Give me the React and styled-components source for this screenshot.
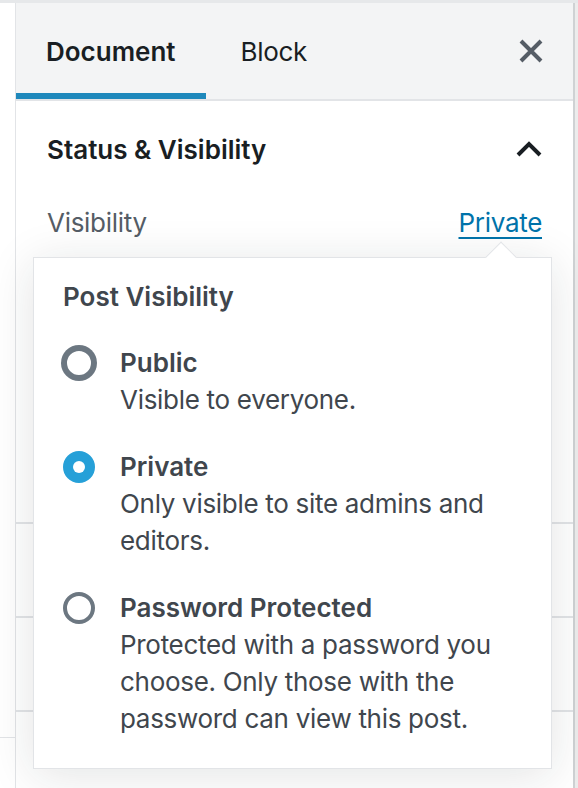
import styled, { createGlobalStyle } from 'styled-components';

const GlobalStyle = createGlobalStyle`
    html, body {
        margin: 0;
        padding: 0;
        background: #fff;
    }
    body {
        font-family: Inter, "Noto Sans", "Liberation Sans", sans-serif;
        -webkit-font-smoothing: antialiased;
    }
    * {
        box-sizing: border-box;
    }
`;

const Page = styled.div`
    width: 578px;
    height: 788px;
    overflow: hidden;
    display: flex;
    flex-direction: column;
`;

const TopBar = styled.div`
    height: 3px;
    flex: 0 0 auto;
    background: #e6e8ea;
`;

const Body = styled.div`
    flex: 1;
    display: flex;
    min-height: 0;
`;

const LeftGutter = styled.div`
    width: 15px;
    flex: 0 0 auto;
    display: flex;
    flex-direction: column;
`;

const GutterBlock = styled.div`
    height: 735px;
    border-bottom: 1px solid #e2e4e7;
`;

const RightGutter = styled.div`
    width: 3px;
    flex: 0 0 auto;
    background: #ececec;
`;

const Sidebar = styled.aside`
    position: relative;
    width: 560px;
    flex: 0 0 auto;
    border-left: 1px solid #e2e4e7;
    border-right: 2px solid #cfd2d4;
    display: flex;
    flex-direction: column;
`;

const Header = styled.header`
    height: 98px;
    flex: 0 0 auto;
    display: flex;
    align-items: stretch;
    background: #f3f4f5;
    border-bottom: 2px solid #e2e4e7;
    padding-right: 20px;
`;

const Tab = styled.button`
    border: none;
    margin: 0;
    background: transparent;
    font-family: inherit;
    font-size: 26px;
    letter-spacing: ${(p) => (p.$active ? '0' : '-0.3px')};
    color: #191e23;
    font-weight: ${(p) => (p.$active ? 600 : 400)};
    padding: 0 ${(p) => (p.$active ? '30px' : '35px')};
    box-shadow: ${(p) => (p.$active ? 'inset 0 -6px 0 #1e88bb' : 'none')};
    display: flex;
    align-items: center;
`;

const HeaderSpacer = styled.div`
    flex: 1;
`;

const IconButton = styled.button`
    border: none;
    background: transparent;
    padding: 0;
    width: ${(p) => p.$width || 44}px;
    display: flex;
    align-items: center;
    justify-content: center;
    color: ${(p) => p.$color || '#555d66'};
`;

const Panel = styled.section`
    flex: 0 0 auto;
    height: ${(p) => p.$height}px;
    border-bottom: 2px solid #e2e4e7;
    padding: 0 31px 0 31px;
    overflow: hidden;
`;

const PanelTitle = styled.div`
    height: ${(p) => p.$height || 96}px;
    display: flex;
    align-items: center;
    justify-content: space-between;
    font-size: 26px;
    font-weight: 600;
    color: #191e23;
`;

const Row = styled.div`
    height: ${(p) => p.$height || 50}px;
    display: flex;
    align-items: center;
    justify-content: space-between;
    font-size: 26px;
    letter-spacing: -0.3px;
    color: #555d66;
`;

const LinkButton = styled.a`
    color: #0073aa;
    text-decoration: underline;
    text-underline-offset: 5px;
    text-decoration-thickness: 2px;
`;

const Popover = styled.div`
    position: absolute;
    left: 17px;
    top: 254px;
    width: 519px;
    background: #fff;
    border: 1px solid #e2e4e7;
    box-shadow: 0 6px 44px rgba(25, 30, 35, 0.12);
    padding: 20px 30px 31px 29px;
    color: #40464d;

    &::before {
        content: '';
        position: absolute;
        left: 456px;
        top: -12px;
        width: 21px;
        height: 21px;
        background: #fff;
        border-top: 1px solid #e2e4e7;
        border-left: 1px solid #e2e4e7;
        transform: rotate(45deg);
    }
`;

const PopoverTitle = styled.div`
    font-size: 26px;
    line-height: 37px;
    font-weight: 600;
    color: #40464d;
    margin-bottom: 29px;
`;

const OptionList = styled.div`
    display: flex;
    flex-direction: column;
    gap: 30px;
`;

const Option = styled.label`
    display: flex;
    align-items: flex-start;
    gap: 25px;
`;

const Radio = styled.span`
    width: 32px;
    height: 32px;
    flex: 0 0 auto;
    margin-top: 3px;
    border-radius: 50%;
    border: 4px solid ${(p) => (p.$checked ? '#26a0d8' : '#6c7781')};
    background: ${(p) => (p.$checked ? '#26a0d8' : '#fff')};
    box-shadow: ${(p) => (p.$focused ? '0 0 0 2px #6c7781' : 'none')};
    display: flex;
    align-items: center;
    justify-content: center;

    &::after {
        content: '';
        display: ${(p) => (p.$checked ? 'block' : 'none')};
        width: 12px;
        height: 12px;
        border-radius: 50%;
        background: #fff;
    }
`;

const OptionText = styled.div`
    display: flex;
    flex-direction: column;
    font-size: 26px;
    line-height: 37px;
    max-width: 400px;
`;

const OptionLabel = styled.span`
    font-weight: 600;
    color: #40464d;
`;

const OptionHelp = styled.span`
    color: #40464d;
    letter-spacing: -0.3px;
`;

const CloseIcon = () => (
    <svg width="24" height="24" viewBox="0 0 24 24" fill="none" stroke="currentColor" strokeWidth="4" strokeLinecap="butt">
        <path d="M2 2 L22 22 M22 2 L2 22" />
    </svg>
);

const ChevronUp = () => (
    <svg width="26" height="16" viewBox="0 0 26 16" fill="none" stroke="currentColor" strokeWidth="4">
        <path d="M2 14 L13 3 L24 14" />
    </svg>
);

const options = [
    { id: 'public', label: 'Public', help: 'Visible to everyone.', focused: true },
    { id: 'private', label: 'Private', help: 'Only visible to site admins and editors.', checked: true },
    {
        id: 'password',
        label: 'Password Protected',
        help: 'Protected with a password you choose. Only those with the password can view this post.',
    },
];

export default function App() {
    return (
        <>
            <GlobalStyle />
            <Page>
                <TopBar />
                <Body>
                    <LeftGutter>
                        <GutterBlock />
                    </LeftGutter>
                    <Sidebar>
                        <Header>
                            <Tab $active>Document</Tab>
                            <Tab>Block</Tab>
                            <HeaderSpacer />
                            <IconButton aria-label="Close settings">
                                <CloseIcon />
                            </IconButton>
                        </Header>

                        <Panel $height={423}>
                            <PanelTitle>
                                Status &amp; Visibility
                                <IconButton $color="#191e23" $width={26}>
                                    <ChevronUp />
                                </IconButton>
                            </PanelTitle>
                            <Row>
                                Visibility
                                <LinkButton href="#">Private</LinkButton>
                            </Row>
                        </Panel>
                        {/* collapsed panels sitting behind the popover */}
                        <Panel $height={94} />
                        <Panel $height={94} />
                        <Panel $height={94} />

                        <Popover role="dialog">
                            <PopoverTitle>Post Visibility</PopoverTitle>
                            <OptionList>
                                {options.map((o) => (
                                    <Option key={o.id}>
                                        <Radio $checked={o.checked} $focused={o.focused} />
                                        <OptionText>
                                            <OptionLabel>{o.label}</OptionLabel>
                                            <OptionHelp>{o.help}</OptionHelp>
                                        </OptionText>
                                    </Option>
                                ))}
                            </OptionList>
                        </Popover>
                    </Sidebar>
                    <RightGutter />
                </Body>
            </Page>
        </>
    );
}
